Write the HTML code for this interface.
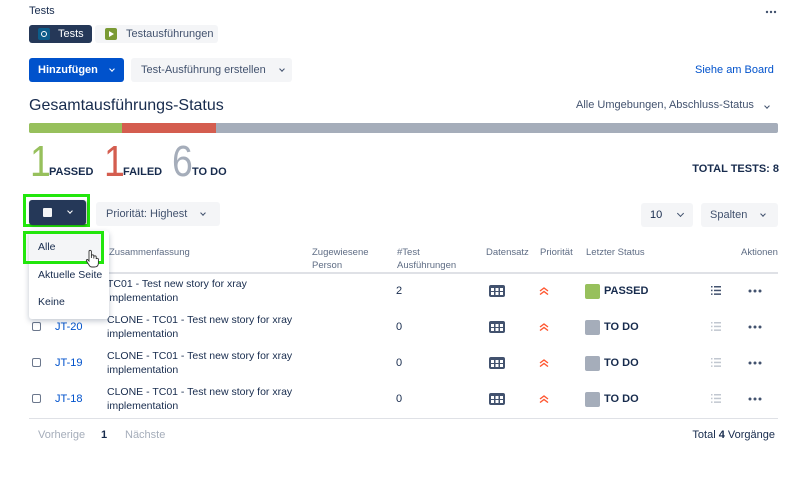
<!DOCTYPE html>
<html><head><meta charset="utf-8"><style>
*{margin:0;padding:0;box-sizing:border-box}
body{width:796px;height:493px;background:#fff;font-family:"Liberation Sans",sans-serif;color:#172b4d;position:relative;overflow:hidden;font-size:11px}
.a{position:absolute;white-space:nowrap}
.btn{position:absolute;border-radius:3px;background:#f4f5f7;color:#42526e;font-size:11px;display:flex;align-items:center}
.chev{display:inline-block;width:5px;height:5px;border-right:1.5px solid currentColor;border-bottom:1.5px solid currentColor;transform:rotate(45deg);margin-top:-3px}
.hd{position:absolute;color:#5e6c84;font-size:9.5px;line-height:13px}
.cb{position:absolute;left:32px;width:9px;height:9px;border:1.3px solid #6b778c;border-radius:2px;background:#fff}
.key{position:absolute;left:55px;color:#0052cc;font-size:11px}
.sum{position:absolute;left:107px;font-size:10.5px;line-height:14px;color:#172b4d}
.num{position:absolute;left:396px;font-size:11px}
.ds{position:absolute;left:489px;width:16px;height:12px;background:#42526e;border-radius:2px}
.ds::before{content:"";position:absolute;left:2px;top:3px;width:12px;height:7px;background:
linear-gradient(90deg,transparent 3px,#42526e 3px,#42526e 4.5px,transparent 4.5px,transparent 7.5px,#42526e 7.5px,#42526e 9px,transparent 9px),
linear-gradient(0deg,transparent 3px,#42526e 3px,#42526e 4px,transparent 4px),#fff}
.pr{position:absolute;left:539px}
.sq{position:absolute;left:585px;width:15px;height:15px;border-radius:2px}
.st{position:absolute;left:604px;font-weight:bold;font-size:11px}
.li{position:absolute;left:711px}
.dots{position:absolute;left:748px}
.big{position:absolute;font-size:44px;line-height:40px;font-weight:300;transform:scaleX(.85);transform-origin:left}
</style></head><body>
<div class="a" style="left:29px;top:5px;font-size:11px">Tests</div>
<svg class="a" style="left:765px;top:10px" width="12" height="4"><circle cx="2" cy="2" r="1.2" fill="#42526e"/><circle cx="6" cy="2" r="1.2" fill="#42526e"/><circle cx="10" cy="2" r="1.2" fill="#42526e"/></svg>

<div class="btn" style="left:29px;top:25px;width:63px;height:18px;background:#253858;color:#fff;font-size:11px">
<span style="display:inline-block;width:12px;height:12px;background:#0c5d8a;border-radius:2px;margin:0 8px 0 9px;position:relative"><span style="position:absolute;left:3px;top:3px;width:6px;height:6px;border:1.5px solid #fff;border-radius:50%"></span></span>Tests</div>
<div class="btn" style="left:95px;top:25px;width:123px;height:18px">
<span style="display:inline-block;width:12px;height:12px;background:#7a9a34;border-radius:2px;margin:0 9px 0 10px;position:relative"><span style="position:absolute;left:4px;top:3px;border-left:5px solid #fff;border-top:3px solid transparent;border-bottom:3px solid transparent"></span></span>Testausführungen</div>

<div class="btn" style="left:29px;top:58px;width:95px;height:24px;background:#0052cc;color:#fff;font-weight:bold;padding-left:9px">Hinzufügen<span class="chev" style="margin-left:12px;width:4px;height:4px"></span></div>
<div class="btn" style="left:131px;top:58px;width:161px;height:24px;padding-left:10px">Test-Ausführung erstellen<span class="chev" style="margin-left:14px;width:4px;height:4px"></span></div>
<div class="a" style="left:695px;top:64px;color:#0052cc;font-size:11px">Siehe am Board</div>

<div class="a" style="left:29px;top:97px;font-size:16px">Gesamtausführungs-Status</div>
<div class="a" style="left:576px;top:99px;font-size:11px;color:#42526e">Alle Umgebungen, Abschluss-Status <span class="chev" style="margin-left:8px;width:4px;height:4px"></span></div>

<div class="a" style="left:29px;top:123px;width:749px;height:10px;background:#a5adba;border-radius:2px;overflow:hidden">
<div style="position:absolute;left:0;top:0;width:93px;height:10px;background:#97c05c"></div>
<div style="position:absolute;left:93px;top:0;width:94px;height:10px;background:#d45d4f"></div></div>

<div class="big" style="left:30px;top:142px;color:#97c05c">1</div>
<div class="a" style="left:49px;top:166px;font-size:11px;font-weight:bold">PASSED</div>
<div class="big" style="left:104px;top:142px;color:#d45d4f">1</div>
<div class="a" style="left:123px;top:166px;font-size:11px;font-weight:bold">FAILED</div>
<div class="big" style="left:172px;top:142px;color:#a5adba">6</div>
<div class="a" style="left:192px;top:166px;font-size:11px;font-weight:bold">TO DO</div>
<div class="a" style="right:17px;top:163px;font-size:11px;font-weight:bold">TOTAL TESTS: 8</div>

<div class="a" style="left:23px;top:194px;width:67px;height:33px;border:3px solid #22e60c"></div>
<div class="btn" style="left:29px;top:200px;width:57px;height:25px;background:#253858;color:#fff;box-shadow:1px 1px 2px rgba(0,0,0,.3)">
<span style="display:inline-block;width:9px;height:9px;background:#f4f5f7;margin-left:14px;border-radius:1px"></span><span class="chev" style="margin-left:16px;width:4px;height:4px"></span></div>
<div class="btn" style="left:96px;top:202px;width:124px;height:24px;padding-left:10px">Priorität: Highest<span class="chev" style="margin-left:14px;width:4px;height:4px"></span></div>
<div class="btn" style="left:641px;top:203px;width:52px;height:24px;padding-left:9px;color:#172b4d">10<span class="chev" style="margin-left:16px;width:5px;height:5px;color:#42526e"></span></div>
<div class="btn" style="left:701px;top:203px;width:77px;height:24px;padding-left:9px">Spalten<span class="chev" style="margin-left:14px;width:4px;height:4px"></span></div>

<div class="hd" style="left:109px;top:246px">Zusammenfassung</div>
<div class="hd" style="left:312px;top:246px">Zugewiesene<br>Person</div>
<div class="hd" style="left:397px;top:246px">#Test<br>Ausführungen</div>
<div class="hd" style="left:486px;top:246px">Datensatz</div>
<div class="hd" style="left:540px;top:246px">Priorität</div>
<div class="hd" style="left:586px;top:246px">Letzter Status</div>
<div class="hd" style="left:741px;top:246px">Aktionen</div>
<div class="a" style="left:29px;top:272px;width:749px;height:2px;background:#dfe1e6"></div>

<!-- rows -->
<div class="cb" style="top:286px"></div><div class="key" style="top:285px">JT-21</div>
<div class="sum" style="top:277px">TC01 - Test new story for xray<br>implementation</div>
<div class="num" style="top:285px">2</div><div class="ds" style="top:285px"></div>
<svg class="pr" style="top:287px" width="10" height="8"><path d="M1 4 L5 1 L9 4 M1 7.5 L5 4.5 L9 7.5" fill="none" stroke="#ff5630" stroke-width="1.4"/></svg>
<div class="sq" style="top:284px;background:#97c05c"></div><div class="st" style="top:285px">PASSED</div>
<svg class="li" style="top:286px" width="10" height="9"><g fill="#42526e"><rect x="3" y="0" width="7" height="1.5"/><rect x="3" y="3.7" width="7" height="1.5"/><rect x="3" y="7.4" width="7" height="1.5"/><rect x="0" y="0" width="1.5" height="1.5"/><rect x="0" y="3.7" width="1.5" height="1.5"/><rect x="0" y="7.4" width="1.5" height="1.5"/></g></svg>
<svg class="dots" style="top:289px" width="14" height="4"><circle cx="2" cy="2" r="1.5" fill="#42526e"/><circle cx="7" cy="2" r="1.5" fill="#42526e"/><circle cx="12" cy="2" r="1.5" fill="#42526e"/></svg>

<div class="cb" style="top:322px"></div><div class="key" style="top:321px">JT-20</div>
<div class="sum" style="top:313px">CLONE - TC01 - Test new story for xray<br>implementation</div>
<div class="num" style="top:321px">0</div><div class="ds" style="top:321px"></div>
<svg class="pr" style="top:323px" width="10" height="8"><path d="M1 4 L5 1 L9 4 M1 7.5 L5 4.5 L9 7.5" fill="none" stroke="#ff5630" stroke-width="1.4"/></svg>
<div class="sq" style="top:320px;background:#a5adba"></div><div class="st" style="top:321px">TO DO</div>
<svg class="li" style="top:322px" width="10" height="9"><g fill="#c1c7d0"><rect x="3" y="0" width="7" height="1.5"/><rect x="3" y="3.7" width="7" height="1.5"/><rect x="3" y="7.4" width="7" height="1.5"/><rect x="0" y="0" width="1.5" height="1.5"/><rect x="0" y="3.7" width="1.5" height="1.5"/><rect x="0" y="7.4" width="1.5" height="1.5"/></g></svg>
<svg class="dots" style="top:325px" width="14" height="4"><circle cx="2" cy="2" r="1.5" fill="#42526e"/><circle cx="7" cy="2" r="1.5" fill="#42526e"/><circle cx="12" cy="2" r="1.5" fill="#42526e"/></svg>

<div class="cb" style="top:358px"></div><div class="key" style="top:357px">JT-19</div>
<div class="sum" style="top:349px">CLONE - TC01 - Test new story for xray<br>implementation</div>
<div class="num" style="top:357px">0</div><div class="ds" style="top:357px"></div>
<svg class="pr" style="top:359px" width="10" height="8"><path d="M1 4 L5 1 L9 4 M1 7.5 L5 4.5 L9 7.5" fill="none" stroke="#ff5630" stroke-width="1.4"/></svg>
<div class="sq" style="top:356px;background:#a5adba"></div><div class="st" style="top:357px">TO DO</div>
<svg class="li" style="top:358px" width="10" height="9"><g fill="#c1c7d0"><rect x="3" y="0" width="7" height="1.5"/><rect x="3" y="3.7" width="7" height="1.5"/><rect x="3" y="7.4" width="7" height="1.5"/><rect x="0" y="0" width="1.5" height="1.5"/><rect x="0" y="3.7" width="1.5" height="1.5"/><rect x="0" y="7.4" width="1.5" height="1.5"/></g></svg>
<svg class="dots" style="top:361px" width="14" height="4"><circle cx="2" cy="2" r="1.5" fill="#42526e"/><circle cx="7" cy="2" r="1.5" fill="#42526e"/><circle cx="12" cy="2" r="1.5" fill="#42526e"/></svg>

<div class="cb" style="top:394px"></div><div class="key" style="top:393px">JT-18</div>
<div class="sum" style="top:385px">CLONE - TC01 - Test new story for xray<br>implementation</div>
<div class="num" style="top:393px">0</div><div class="ds" style="top:393px"></div>
<svg class="pr" style="top:395px" width="10" height="8"><path d="M1 4 L5 1 L9 4 M1 7.5 L5 4.5 L9 7.5" fill="none" stroke="#ff5630" stroke-width="1.4"/></svg>
<div class="sq" style="top:392px;background:#a5adba"></div><div class="st" style="top:393px">TO DO</div>
<svg class="li" style="top:394px" width="10" height="9"><g fill="#c1c7d0"><rect x="3" y="0" width="7" height="1.5"/><rect x="3" y="3.7" width="7" height="1.5"/><rect x="3" y="7.4" width="7" height="1.5"/><rect x="0" y="0" width="1.5" height="1.5"/><rect x="0" y="3.7" width="1.5" height="1.5"/><rect x="0" y="7.4" width="1.5" height="1.5"/></g></svg>
<svg class="dots" style="top:397px" width="14" height="4"><circle cx="2" cy="2" r="1.5" fill="#42526e"/><circle cx="7" cy="2" r="1.5" fill="#42526e"/><circle cx="12" cy="2" r="1.5" fill="#42526e"/></svg>

<div class="a" style="left:29px;top:418px;width:749px;height:1px;background:#dfe1e6"></div>
<div class="a" style="left:38px;top:429px;color:#a5adba;font-size:11px">Vorherige</div>
<div class="a" style="left:101px;top:429px;font-weight:bold;font-size:11px">1</div>
<div class="a" style="left:125px;top:429px;color:#a5adba;font-size:11px">Nächste</div>
<div class="a" style="right:21px;top:429px;font-size:11px">Total <b>4</b> Vorgänge</div>

<!-- dropdown -->
<div class="a" style="left:29px;top:231px;width:80px;height:88px;background:#fff;border-radius:3px;box-shadow:0 2px 6px rgba(9,30,66,.25)"></div>
<div class="a" style="left:29px;top:234px;width:72px;height:26px;background:#f4f5f7"></div>
<div class="a" style="left:38px;top:241px;font-size:10.5px;color:#172b4d">Alle</div>
<div class="a" style="left:38px;top:269px;font-size:10.5px;color:#172b4d">Aktuelle Seite</div>
<div class="a" style="left:38px;top:296px;font-size:10.5px;color:#172b4d">Keine</div>
<div class="a" style="left:23px;top:231px;width:81px;height:33px;border:3px solid #22e60c"></div>
<svg class="a" style="left:85px;top:249px" width="14" height="20"><path d="M4 12 V2.5 a1.2 1.2 0 0 1 2.4 0 V9 V7 a1.2 1.2 0 0 1 2.4 0 V9.5 V8 a1.2 1.2 0 0 1 2.4 0 V10 a1.2 1.2 0 0 1 2.2 0 V14 q0 4 -4 4 H7 q-2 0 -3 -2 L1.5 12 q-0.5 -1.5 1 -1.5 Z" fill="#fff" stroke="#333" stroke-width="0.9"/></svg>
</body></html>
